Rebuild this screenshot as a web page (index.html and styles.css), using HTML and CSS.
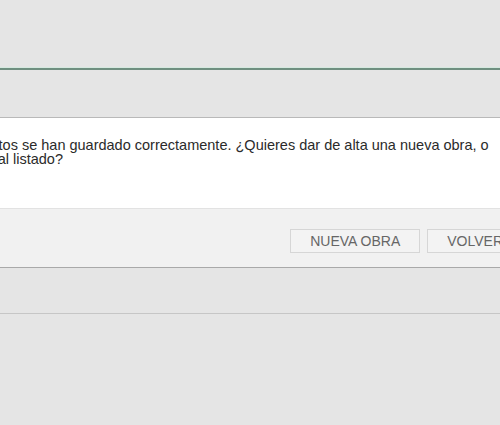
FILE: index.html
```html
<!DOCTYPE html>
<html lang="es">
<head>
<meta charset="utf-8">
<title>Obra guardada</title>
<link rel="stylesheet" href="styles.css">
</head>
<body>
<div class="page">
  <header class="topbar"></header>
  <div class="rule"></div>
  <main class="content">
    <section class="dialog">
      <div class="dialog-body">
        <p class="message">Los datos se han guardado correctamente. ¿Quieres dar de alta una nueva obra, o volver al listado?</p>
      </div>
      <div class="dialog-footer">
        <button class="btn" type="button">NUEVA OBRA</button>
        <button class="btn" type="button">VOLVER</button>
      </div>
    </section>
  </main>
  <div class="divider"></div>
</div>
</body>
</html>
```

FILE: styles.css
```css
html, body {
  margin: 0;
  padding: 0;
  background: #e5e5e5;
}

.page {
  width: 500px;
  height: 425px;
  overflow: hidden;
  font-family: "Liberation Sans", Arial, sans-serif;
}

.topbar {
  height: 67px;
}

.rule {
  height: 0;
  border-top: 1px solid #d6e9e0;
  border-bottom: 2px solid #6f8f80;
}

.content {
  padding-top: 47px;
}

.dialog {
  width: 606px;
  margin-left: -66px;
  box-sizing: border-box;
  border: 1px solid #b9b9b9;
  border-bottom-color: #a9a9a9;
  background: #ffffff;
}

.dialog-body {
  height: 90px;
  box-sizing: border-box;
  padding: 20px 20px 0 20px;
}

.message {
  margin: 0;
  font-size: 14.5px;
  line-height: 14px;
  color: #2b2b2b;
}

.dialog-footer {
  border-top: 1px solid #e2e2e2;
  background: #f1f1f1;
  padding: 20px 16px 14px 0;
  display: flex;
  justify-content: flex-end;
  gap: 7px;
}

.btn {
  height: 24px;
  box-sizing: border-box;
  margin: 0;
  padding: 0 19px;
  border: 1px solid #d6d6d6;
  background: #f3f3f3;
  color: #666666;
  font-family: "Liberation Sans", Arial, sans-serif;
  font-size: 14px;
  line-height: 22px;
}

.divider {
  margin-top: 45px;
  height: 0;
  border-top: 1px solid #c6c6c6;
}
```
